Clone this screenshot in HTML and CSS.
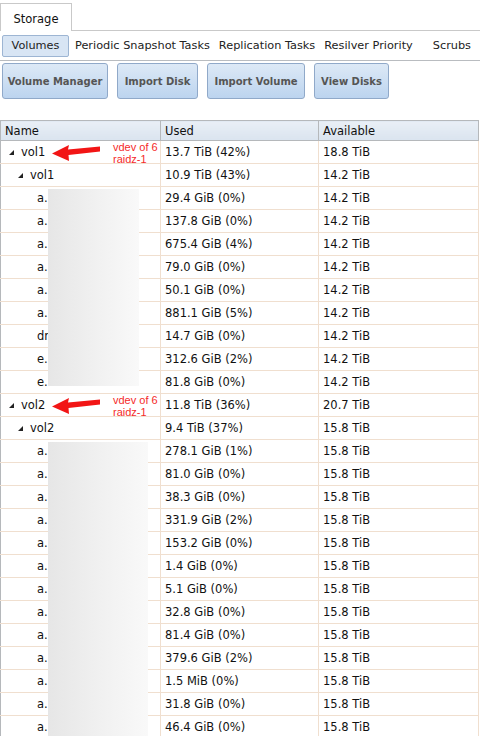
FILE: index.html
```html
<!DOCTYPE html>
<html lang="en">
<head>
    <meta charset="UTF-8">
    <title>Storage</title>
    <link rel="stylesheet" href="styles.css">
</head>
<body>
    <div class="tabbar">
        <div class="tab">Storage</div>
    </div>
    <div class="subtabs">
        <span class="subtab active">Volumes</span>
        <span class="subtab">Periodic Snapshot Tasks</span>
        <span class="subtab">Replication Tasks</span>
        <span class="subtab">Resilver Priority</span>
        <span class="subtab scrubs">Scrubs</span>
    </div>
    <div class="toolbar">
        <button class="btn b1">Volume Manager</button>
        <button class="btn b2">Import Disk</button>
        <button class="btn b3">Import Volume</button>
        <button class="btn b4">View Disks</button>
    </div>
    <div class="grid">
        <table>
            <thead>
                <tr><th class="c-name">Name</th><th class="c-used">Used</th><th>Available</th></tr>
            </thead>
            <tbody>
                <tr><td class="lvl0"><span class="exp"></span>vol1<span class="note"><svg class="arrow" width="50" height="18" viewBox="0 0 50 18"><path d="M49 2.5 L17 5.5 L18 1 L1 9.5 L18 17 L17.5 11 L49 7.5 Z" fill="#f21515"/></svg><span class="note-text">vdev of 6<br>raidz-1</span></span></td><td>13.7 TiB (42%)</td><td>18.8 TiB</td></tr>
                <tr><td class="lvl1"><span class="exp"></span>vol1</td><td>10.9 TiB (43%)</td><td>14.2 TiB</td></tr>
                <tr><td class="lvl2">a.</td><td>29.4 GiB (0%)</td><td>14.2 TiB</td></tr>
                <tr><td class="lvl2">a.</td><td>137.8 GiB (0%)</td><td>14.2 TiB</td></tr>
                <tr><td class="lvl2">a.</td><td>675.4 GiB (4%)</td><td>14.2 TiB</td></tr>
                <tr><td class="lvl2">a.</td><td>79.0 GiB (0%)</td><td>14.2 TiB</td></tr>
                <tr><td class="lvl2">a.</td><td>50.1 GiB (0%)</td><td>14.2 TiB</td></tr>
                <tr><td class="lvl2">a.</td><td>881.1 GiB (5%)</td><td>14.2 TiB</td></tr>
                <tr><td class="lvl2">dr</td><td>14.7 GiB (0%)</td><td>14.2 TiB</td></tr>
                <tr><td class="lvl2">e.</td><td>312.6 GiB (2%)</td><td>14.2 TiB</td></tr>
                <tr><td class="lvl2">e.</td><td>81.8 GiB (0%)</td><td>14.2 TiB</td></tr>
                <tr><td class="lvl0"><span class="exp"></span>vol2<span class="note"><svg class="arrow" width="50" height="18" viewBox="0 0 50 18"><path d="M49 2.5 L17 5.5 L18 1 L1 9.5 L18 17 L17.5 11 L49 7.5 Z" fill="#f21515"/></svg><span class="note-text">vdev of 6<br>raidz-1</span></span></td><td>11.8 TiB (36%)</td><td>20.7 TiB</td></tr>
                <tr><td class="lvl1"><span class="exp"></span>vol2</td><td>9.4 TiB (37%)</td><td>15.8 TiB</td></tr>
                <tr><td class="lvl2">a.</td><td>278.1 GiB (1%)</td><td>15.8 TiB</td></tr>
                <tr><td class="lvl2">a.</td><td>81.0 GiB (0%)</td><td>15.8 TiB</td></tr>
                <tr><td class="lvl2">a.</td><td>38.3 GiB (0%)</td><td>15.8 TiB</td></tr>
                <tr><td class="lvl2">a.</td><td>331.9 GiB (2%)</td><td>15.8 TiB</td></tr>
                <tr><td class="lvl2">a.</td><td>153.2 GiB (0%)</td><td>15.8 TiB</td></tr>
                <tr><td class="lvl2">a.</td><td>1.4 GiB (0%)</td><td>15.8 TiB</td></tr>
                <tr><td class="lvl2">a.</td><td>5.1 GiB (0%)</td><td>15.8 TiB</td></tr>
                <tr><td class="lvl2">a.</td><td>32.8 GiB (0%)</td><td>15.8 TiB</td></tr>
                <tr><td class="lvl2">a.</td><td>81.4 GiB (0%)</td><td>15.8 TiB</td></tr>
                <tr><td class="lvl2">a.</td><td>379.6 GiB (2%)</td><td>15.8 TiB</td></tr>
                <tr><td class="lvl2">a.</td><td>1.5 MiB (0%)</td><td>15.8 TiB</td></tr>
                <tr><td class="lvl2">a.</td><td>31.8 GiB (0%)</td><td>15.8 TiB</td></tr>
                <tr><td class="lvl2">a.</td><td>46.4 GiB (0%)</td><td>15.8 TiB</td></tr>
            </tbody>
        </table>
        <div class="redact r1"></div>
        <div class="redact r2"></div>
    </div>
</body>
</html>
```

FILE: styles.css
```css
body {
    margin: 0;
    width: 480px;
    font-family: "DejaVu Sans", Verdana, sans-serif;
    font-size: 11px;
    color: #111;
    background: #fff;
    overflow: hidden;
}
.tabbar {
    height: 30px;
    border-bottom: 1px solid #c9c9c9;
    display: flex;
    align-items: flex-end;
}
.tab {
    width: 72px;
    height: 28px;
    box-sizing: border-box;
    border: 1px solid #c9c9c9;
    border-bottom: none;
    margin-bottom: -1px;
    background: #fff;
    display: flex;
    align-items: center;
    justify-content: center;
    padding-top: 2px;
    font-size: 11.5px;
}
.subtabs {
    height: 29px;
    border-bottom: 1px solid #b9bcc0;
    display: flex;
    align-items: center;
    padding-left: 2px;
    font-size: 11.3px;
    color: #222;
}
.subtab {
    line-height: 20px;
    white-space: nowrap;
    margin-right: 9px;
}
.subtab.active {
    width: 67px;
    box-sizing: border-box;
    text-align: center;
    background: #d8e5f4;
    border: 1px solid #9db5d3;
    border-radius: 2px;
    margin-right: 6px;
}
.subtab.scrubs {
    margin-left: 11px;
}
.toolbar {
    display: flex;
    gap: 9px;
    padding: 2px 2px 0;
    height: 59px;
    box-sizing: border-box;
}
.btn {
    height: 36px;
    font-family: "DejaVu Sans", Verdana, sans-serif;
    font-size: 10px;
    font-weight: bold;
    color: #555;
    white-space: nowrap;
    background: linear-gradient(#dde9f6, #bcd4ef);
    border: 1px solid #90a9c9;
    border-radius: 3px;
    padding: 0;
}
.b1 { width: 106px; }
.b2 { width: 81px; }
.b3 { width: 98px; }
.b4 { width: 75px; }
.grid {
    position: relative;
    width: 479px;
}
table {
    width: 479px;
    border-collapse: collapse;
    table-layout: fixed;
    border-left: 1px solid #b5b8bb;
    border-right: 1px solid #b5b8bb;
}
th {
    height: 19px;
    padding: 0 0 0 4px;
    text-align: left;
    font-weight: normal;
    font-size: 11.5px;
    background: linear-gradient(#e9eff6, #dae4ef);
    border: 1px solid #b5b8bb;
}
.c-name { width: 155px; }
.c-used { width: 153px; }
td {
    height: 22px;
    padding: 0 0 0 4px;
    font-size: 11.5px;
    border-right: 1px solid #f0dfcf;
    border-bottom: 1px solid #f0dfcf;
    white-space: nowrap;
}
td:first-child {
    position: relative;
}
.lvl0 { padding-left: 20px; }
.lvl1 { padding-left: 29px; }
.lvl2 { padding-left: 36px; }
.exp {
    display: inline-block;
    width: 0;
    height: 0;
    border-left: 5px solid transparent;
    border-bottom: 5px solid #222;
    margin-left: -12px;
    margin-right: 7px;
    vertical-align: 1px;
}
.note {
    position: absolute;
    left: 50px;
    top: 0;
    display: flex;
}
.arrow {
    margin-top: 3px;
}
.note-text {
    margin-left: 12px;
    font-family: "Liberation Sans", Arial, sans-serif;
    font-size: 11px;
    line-height: 12px;
    color: #f52a2a;
}
.redact {
    position: absolute;
    left: 48px;
    background: linear-gradient(90deg, #e6e6e6, #f0f0f0 50%, #f9f9f9);
}
.r1 {
    top: 69px;
    width: 91px;
    height: 197px;
}
.r2 {
    top: 322px;
    width: 100px;
    height: 300px;
}
```
